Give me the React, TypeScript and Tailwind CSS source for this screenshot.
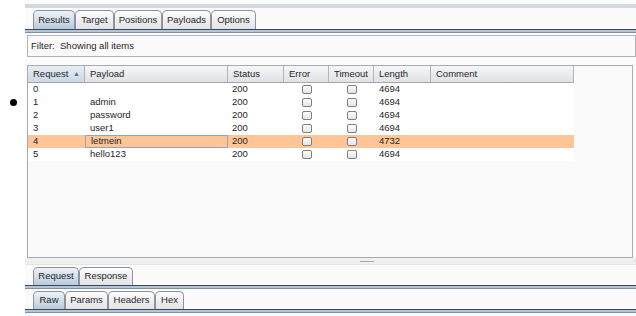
import React from "react";

type Row = { id: string; payload: string; status: string; length: string; selected?: boolean };

const rows: Row[] = [
  { id: "0", payload: "", status: "200", length: "4694" },
  { id: "1", payload: "admin", status: "200", length: "4694" },
  { id: "2", payload: "password", status: "200", length: "4694" },
  { id: "3", payload: "user1", status: "200", length: "4694" },
  { id: "4", payload: "letmein", status: "200", length: "4732", selected: true },
  { id: "5", payload: "hello123", status: "200", length: "4694" },
];

// column widths in px, table starts at x=27
const cols = [
  { label: "Request", w: 57 },
  { label: "Payload", w: 143 },
  { label: "Status", w: 56 },
  { label: "Error", w: 45 },
  { label: "Timeout", w: 45 },
  { label: "Length", w: 57 },
  { label: "Comment", w: 143 },
];

function Tab({ label, active, w }: { label: string; active?: boolean; w: number }) {
  return (
    <div
      style={{ width: w }}
      className={
        "flex h-full items-center justify-center rounded-t-[5px] border border-b-0 border-[#8d939c] text-[9.5px] text-[#262626] " +
        (active
          ? "bg-gradient-to-b from-[#eef3f8] to-[#b9cadb]"
          : "bg-gradient-to-b from-[#fdfdfd] to-[#e2e3e6]")
      }
    >
      {label}
    </div>
  );
}

function TabBand() {
  return <div className="h-[4px] border-t border-b border-t-[#3f4756] border-b-[#7f8fa2] bg-[#b3c5d9]" />;
}

function Check() {
  return (
    <div className="h-[9px] w-[10px] rounded-[2px] border border-[#7d7f83] bg-gradient-to-b from-white to-[#e3e4e6]" />
  );
}

function HeaderCell({ label, w, active }: { label: string; w: number; active?: boolean }) {
  return (
    <div
      style={{ width: w }}
      className={
        "flex h-full shrink-0 items-center justify-between border-r border-[#b2b6bc] pl-[5px] pr-[4px] " +
        (active
          ? "bg-gradient-to-b from-[#e7edf4] to-[#ccd8e5]"
          : "bg-gradient-to-b from-[#f5f6f8] to-[#dfe2e6]")
      }
    >
      <span>{label}</span>
      {active && <span className="text-[7px] text-[#4f6f9c]">▲</span>}
    </div>
  );
}

export default function App() {
  return (
    <div
      className="flex h-[316px] w-[636px] overflow-hidden bg-[#fbfbfb] text-[#262626]"
      style={{ fontFamily: '"Liberation Sans", Arial, sans-serif' }}
    >
      <div className="w-[25px] shrink-0 bg-white pl-[10px] pt-[99px]">
        <div className="h-[7px] w-[7px] rounded-full bg-black" />
      </div>

      <div className="flex min-w-0 flex-1 flex-col pt-[4px]">
        <div className="h-[4px] bg-[#d4d8df]" />

        <div className="mt-[2px] flex h-[19px] pl-[8px]">
          <Tab label="Results" active w={42} />
          <Tab label="Target" w={39} />
          <Tab label="Positions" w={48} />
          <Tab label="Payloads" w={49} />
          <Tab label="Options" w={45} />
        </div>
        <TabBand />

        <div className="ml-[2px] mt-[2px] flex h-[22px] items-center border border-[#b3b3b3] bg-[#fafafa] pl-[3px] pt-[1px] text-[9.5px]">
          Filter:&nbsp; Showing all items
        </div>

        <div className="ml-[2px] mr-[3px] mt-[8px] h-[193px] border border-[#a9abae] bg-[#fafafa]">
          <div className="w-[546px] text-[9.5px]">
            <div className="flex h-[17px] border-b border-[#a3a7ad]">
              {cols.map((c, i) => (
                <HeaderCell key={c.label} label={c.label} w={c.w} active={i === 0} />
              ))}
            </div>
            <div className="bg-white">
              {rows.map((r) => (
                <div
                  key={r.id}
                  className={"flex h-[13px] items-center " + (r.selected ? "bg-[#ffc596]" : "")}
                >
                  <div style={{ width: 57 }} className="shrink-0 pl-[5px]">
                    {r.id}
                  </div>
                  <div
                    style={{ width: 143 }}
                    className={
                      "flex h-full shrink-0 items-center pl-[5px] " +
                      (r.selected ? "border border-[#8fa6be]" : "")
                    }
                  >
                    {r.payload}
                  </div>
                  <div style={{ width: 56 }} className="shrink-0 pl-[4px]">
                    {r.status}
                  </div>
                  <div style={{ width: 45 }} className="flex shrink-0 justify-center">
                    <Check />
                  </div>
                  <div style={{ width: 45 }} className="flex shrink-0 justify-center">
                    <Check />
                  </div>
                  <div style={{ width: 57 }} className="shrink-0 pl-[5px]">
                    {r.length}
                  </div>
                  <div style={{ width: 143 }} className="shrink-0" />
                </div>
              ))}
            </div>
          </div>
        </div>

        <div className="flex h-[7px] items-center justify-center border-b border-[#e4e5e7] bg-[#eeeff1] pl-[72px]">
          <div className="h-[1px] w-[14px] bg-[#a4a6aa]" />
        </div>

        <div className="mt-[2px] flex h-[18px] pl-[8px]">
          <Tab label="Request" active w={46} />
          <Tab label="Response" w={54} />
        </div>
        <TabBand />

        <div className="mt-[2px] flex h-[18px] pl-[8px]">
          <Tab label="Raw" active w={32} />
          <Tab label="Params" w={43} />
          <Tab label="Headers" w={47} />
          <Tab label="Hex" w={29} />
        </div>
        <TabBand />
      </div>
    </div>
  );
}
